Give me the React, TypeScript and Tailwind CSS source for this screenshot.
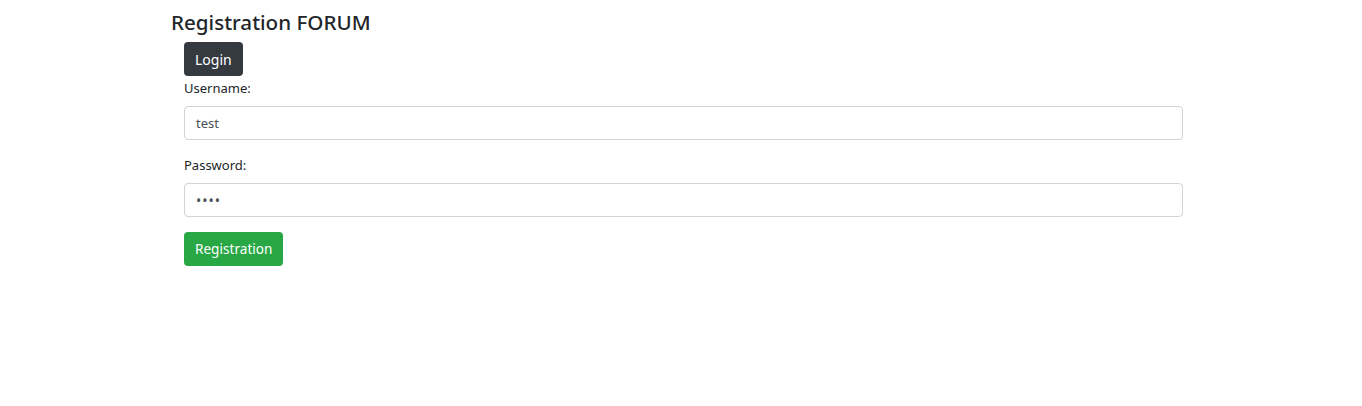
export default function App() {
  return (
    <div className="w-[1362px] h-[406px] bg-white pl-[171px] pt-[9px] text-[#212529] font-['Noto_Sans',sans-serif]">
      <h1 className="text-[20.6px] leading-[26px] font-medium">Registration FORUM</h1>
      <div className="ml-[13px] w-[999px] mt-[7px]">
        <button className="h-[34px] px-[11px] rounded-[4px] bg-[#343a40] text-white text-[14px]">Login</button>
        <label className="block mt-0 text-[13px] leading-[24px]">Username:</label>
        <input
          defaultValue="test"
          className="block mt-[6px] w-full h-[34px] px-[11px] border border-[#ced4da] rounded-[4px] text-[13px] text-[#495057] outline-none"
        />
        <label className="block mt-[13px] text-[13px] leading-[24px]">Password:</label>
        <input
          type="password"
          defaultValue="test"
          className="block mt-[6px] w-full h-[34px] px-[11px] border border-[#ced4da] rounded-[4px] text-[14px] tracking-[1px] text-[#495057] outline-none"
        />
        <button className="mt-[15px] h-[34px] px-[11px] rounded-[4px] bg-[#28a745] text-white text-[13.6px]">Registration</button>
      </div>
    </div>
  );
}
